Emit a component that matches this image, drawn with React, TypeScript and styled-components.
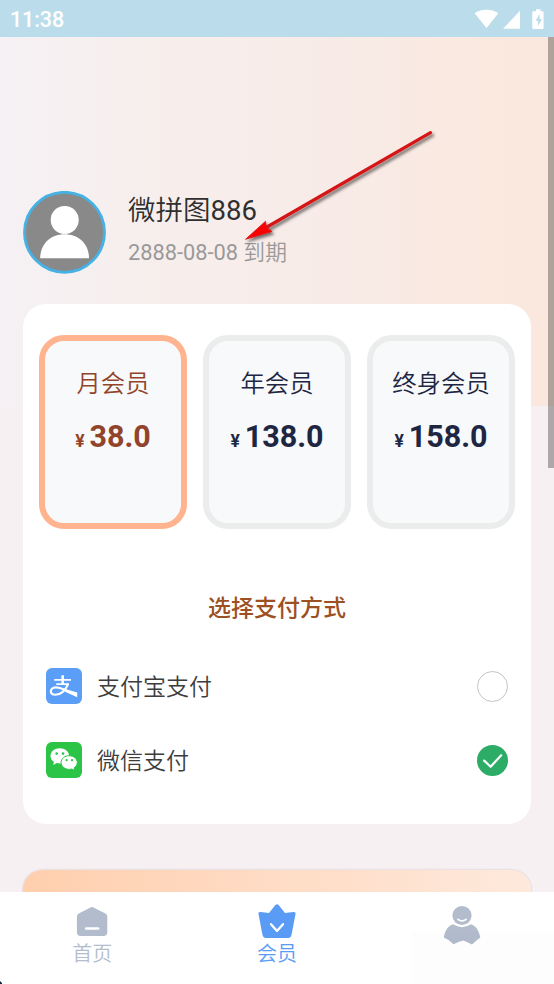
import React from "react";
import styled, { createGlobalStyle } from "styled-components";

const GlobalStyle = createGlobalStyle`
  *, *::before, *::after { box-sizing: border-box; }
  body {
    margin: 0;
    overflow: hidden;
    font-family: Roboto, "Noto Sans CJK SC", sans-serif;
  }
  svg { display: block; flex: none; }
`;

const Screen = styled.div`
  position: relative;
  display: flex;
  flex-direction: column;
  width: 554px;
  height: 984px;
  overflow: hidden;
  background: #f6f0f2;
`;

const StatusBar = styled.header`
  display: flex;
  align-items: center;
  justify-content: space-between;
  height: 37px;
  flex: none;
  padding: 0 9px 0 10px;
  background: #bbddeb;
  color: #fff;
`;

const Clock = styled.span`
  font-size: 21.5px;
  line-height: 37px;
  font-weight: 500;
  padding-top: 2px;
  letter-spacing: -0.1px;
`;

const Content = styled.main`
  position: relative;
  flex: 1;
  min-height: 0;
  overflow: hidden;
  padding: 154px 23px 0;
  background: linear-gradient(90deg, #f5f1f4 0%, #f7eeec 30%, #f8ebe7 60%, #fae8de 92%, #fae8df 100%)
    0 0 / 100% 369px no-repeat #f6f0f2;
`;

const Profile = styled.section`
  display: flex;
  height: 113px;
  gap: 22px;
`;

const ProfileText = styled.div`
  display: flex;
  flex-direction: column;
`;

const Digits = styled.span`
  font-weight: 400;
`;

const UserName = styled.h1`
  margin: 0;
  font-size: 27.500px;
  font-weight: 350;
  line-height: 40px;
  color: #2f2f2f;
`;

const Expiry = styled.p`
  margin: 5px 0 0;
  font-size: 21.800px;
  line-height: 34px;
  font-weight: 350;
  color: #999;
`;

const Card = styled.section`
  height: 520px;
  padding: 31px 16px 0;
  border-radius: 23px;
  background: #fff;
`;

const Plans = styled.div`
  display: grid;
  grid-template-columns: repeat(3, 1fr);
  gap: 16px;
`;

const Plan = styled.button<{ $active?: boolean }>`
  display: flex;
  flex-direction: column;
  align-items: center;
  height: 194px;
  padding: 23px 0 0;
  border: 6px solid ${(p) => (p.$active ? "#ffb48f" : "#ebeded")};
  border-radius: 25px;
  background: #f7f9fb;
  color: ${(p) => (p.$active ? "#92442b" : "#1e2642")};
  font-family: inherit;
`;

const PlanName = styled.span`
  font-size: 24.4px;
  line-height: 40px;
  font-weight: 350;
  white-space: nowrap;
`;

const Price = styled.span`
  display: flex;
  align-items: baseline;
  gap: 5px;
  margin-top: 13px;
  font-size: 30.500px;
  line-height: 40px;
  font-weight: 700;
`;

const Currency = styled.span`
  font-size: 17.500px;
`;

const SectionTitle = styled.h2`
  margin: 60px 0 0;
  font-size: 23px;
  line-height: 40px;
  font-weight: 500;
  text-align: center;
  color: #9d5021;
`;

const PayList = styled.div`
  display: flex;
  flex-direction: column;
  gap: 38px;
  padding: 39px 7px 0;
`;

const PayRow = styled.div`
  display: flex;
  align-items: center;
  height: 36px;
`;

const PayName = styled.span`
  flex: 1;
  padding: 3px 0 0 15px;
  font-size: 23px;
  line-height: 36px;
  font-weight: 350;
  color: #3d3d3d;
`;

const Radio = styled.span<{ $on?: boolean }>`
  display: grid;
  place-items: center;
  width: 31px;
  height: 31px;
  border-radius: 50%;
  border: ${(p) => (p.$on ? "0" : "1px solid #c4c4c4")};
  background: ${(p) => (p.$on ? "#2cac66" : "#fff")};
`;

const Banner = styled.section`
  height: 80px;
  margin: 46px 0 0;
  border-radius: 20px;
  background: linear-gradient(90deg, #ffcfae, #fee9dc);
  box-shadow: 0 0 2px rgba(90, 60, 60, 0.3);
`;

const ScrollThumb = styled.div`
  position: absolute;
  top: 0;
  right: 0;
  width: 6px;
  height: 431px;
  background: rgba(0, 0, 0, 0.3);
`;

const TabBar = styled.nav`
  display: grid;
  grid-template-columns: repeat(3, 1fr);
  height: 92px;
  flex: none;
  background: #fff;
`;

const Tab = styled.div<{ $active?: boolean }>`
  display: flex;
  flex-direction: column;
  align-items: center;
  padding-top: 10px;
  font-size: 20px;
  line-height: 30px;
  font-weight: 350;
  color: ${(p) => (p.$active ? "#5a9bf5" : "#b2bccd")};
`;

const TabLabel = styled.span`
  margin-top: 1px;
`;

const Arrow = styled.svg`
  position: absolute;
  left: 236px;
  top: 122px;
`;

const CornerMark = styled.svg`
  position: absolute;
  left: 0;
  bottom: 0;
`;

const CornerPatch = styled.div`
  position: absolute;
  left: 412px;
  right: 0;
  top: 931px;
  bottom: 0;
  background: rgba(0, 0, 0, 0.006);
`;

const StatusIcons = () => (
  <svg width="70" height="22" viewBox="475 7 70 22" fill="#fff">
    <path d="M474.700 12.300C481 7.700 492 7.700 498.300 12.300L486.500 27Z" />
    <path d="M503 27.800L520 9.800V27.800Z" />
    <path
      fillRule="evenodd"
      d="M536 8.300h4.500v2h1.900q1.200 0 1.200 1.200v15.200q0 1.200-1.200 1.200h-8.900q-1.200 0-1.200-1.200V11.500q0-1.200 1.200-1.200H536Z
       M539.600 12.800l-4 7h2.300v5.500l4-7.300h-2.300Z"
    />
  </svg>
);

const Avatar = () => (
  <svg width="83" height="83" viewBox="0 0 83 83">
    <circle cx="41.500" cy="41.300" r="40" fill="#898989" stroke="#45b1e5" strokeWidth="2.800" />
    <circle cx="41.700" cy="29" r="14" fill="#fff" />
    <path d="M17.200 67.300C17.200 52.500 28 43.200 41.600 43.200S66 52.500 66 67.300Z" fill="#fff" />
  </svg>
);

const AlipayIcon = () => (
  <svg width="36" height="36" viewBox="0 0 36 36">
    <rect width="36" height="36" rx="6" fill="#5a9ef7" />
    <g fill="none" stroke="#fff" strokeLinecap="butt">
      <path d="M8.200 11.800H25M10.300 16.200H23" strokeWidth="1.700" />
      <path d="M16.700 7.300V16" strokeWidth="2.600" />
      <path
        d="M22.200 16C19.500 21.800 15 26.800 9.400 26.800C5.800 26.800 4.500 24.700 4.900 22.600C5.400 20 8.700 18.600 12.800 19.800C18 21.200 24 24.500 31 27"
        strokeWidth="2.100"
      />
    </g>
    <path d="M17.500 20.600L31.200 24.600V29.200L17 22.800Z" fill="#fff" />
  </svg>
);

const WechatIcon = () => (
  <svg width="36" height="36" viewBox="0 0 36 36">
    <rect width="36" height="36" rx="6" fill="#2bc447" />
    <path
      d="M13.700 6.300C8.500 6.300 4.500 9.700 4.500 13.900c0 2.500 1.300 4.600 3.500 6L7.200 23l3.500-1.900c1 .3 2 .4 3 .4 5.300 0 9.400-3.200 9.400-7.600s-4.100-7.600-9.400-7.600Z"
      fill="#fff"
    />
    <path
      d="M23.200 13.700c-4.600 0-8.100 3-8.100 6.800s3.500 6.900 8.100 6.900c.9 0 1.800-.1 2.600-.4l3 1.600-.7-2.700c2-1.300 3.200-3.200 3.200-5.400 0-3.800-3.600-6.800-8.100-6.800Z"
      fill="#fff"
      stroke="#2bc447"
      strokeWidth="1"
    />
    <g fill="#2bc447">
      <circle cx="10.700" cy="11.600" r="1.300" />
      <circle cx="17" cy="11.600" r="1.300" />
      <circle cx="20.600" cy="18.200" r="1.100" />
      <circle cx="26" cy="18.200" r="1.100" />
    </g>
  </svg>
);

const HomeIcon = () => (
  <svg width="38" height="36" viewBox="0 0 38 36">
    <path
      d="M17.500 5.400Q19 4.600 20.500 5.400L32.400 11.500Q34.300 12.600 34.300 14.800V30.300Q34.300 34 30.600 34H7.600Q3.900 34 3.900 30.300V14.800Q3.900 12.600 5.800 11.500Z"
      fill="#b2bccd"
    />
    <path d="M13.200 26.400H25.200" stroke="#fff" strokeWidth="2.500" strokeLinecap="round" />
  </svg>
);

const CrownIcon = () => (
  <svg width="38" height="36" viewBox="0 0 38 36">
    <path
      d="M17.600 2.800Q19 1.500 20.400 2.800L27 11.100L35.500 9.900Q38 9.800 37.500 12L33.700 32Q33 35.900 30.200 35.900H7.800Q5 35.900 4.300 32L.5 12Q0 9.800 2.500 9.900L11 11.100Z"
      fill="#5a9bf5"
    />
    <path
      d="M13 22.200L19 29L25 22.200"
      fill="none"
      stroke="#fff"
      strokeWidth="2.300"
      strokeLinecap="round"
      strokeLinejoin="round"
    />
  </svg>
);

const MineIcon = () => (
  <svg width="38" height="44" viewBox="0 0 38 44" fill="#b2bccd">
    <circle cx="19" cy="13.500" r="9.600" />
    <path d="M14.900 17.300Q19 20.500 23.100 17.300" fill="none" stroke="#fff" strokeWidth="1.700" strokeLinecap="round" />
    <path d="M10 22.300Q19 28 28 22.300C33 23.500 36 29 37.300 35.500L33.500 38.500L29 42.500L24.500 40.300L20 38.600L15.500 40L10.500 42.200L5.500 38L.8 35.500C2 29 5 23.500 10 22.300Z" />
  </svg>
);

const Check = () => (
  <svg width="31" height="31" viewBox="0 0 31 31">
    <path d="M7.200 15.600L13.600 21.700L24.200 10.300" fill="none" stroke="#fff" strokeWidth="2.200" strokeLinecap="round" strokeLinejoin="round" />
  </svg>
);

const plans = [
  { name: "月会员", price: "38.0", active: true },
  { name: "年会员", price: "138.0", active: false },
  { name: "终身会员", price: "158.0", active: false },
];

export default function App() {
  return (
    <>
      <GlobalStyle />
      <Screen>
        <StatusBar>
          <Clock>11:38</Clock>
          <StatusIcons />
        </StatusBar>
        <Content>
          <Profile>
            <Avatar />
            <ProfileText>
              <UserName>
                微拼图<Digits>886</Digits>
              </UserName>
              <Expiry>
                <Digits>2888-08-08</Digits> 到期
              </Expiry>
            </ProfileText>
          </Profile>
          <Card>
            <Plans>
              {plans.map((plan) => (
                <Plan key={plan.name} $active={plan.active}>
                  <PlanName>{plan.name}</PlanName>
                  <Price>
                    <Currency>¥</Currency>
                    {plan.price}
                  </Price>
                </Plan>
              ))}
            </Plans>
            <SectionTitle>选择支付方式</SectionTitle>
            <PayList>
              <PayRow>
                <AlipayIcon />
                <PayName>支付宝支付</PayName>
                <Radio />
              </PayRow>
              <PayRow>
                <WechatIcon />
                <PayName>微信支付</PayName>
                <Radio $on>
                  <Check />
                </Radio>
              </PayRow>
            </PayList>
          </Card>
          <Banner />
          <ScrollThumb />
        </Content>
        <TabBar>
          <Tab>
            <HomeIcon />
            <TabLabel>首页</TabLabel>
          </Tab>
          <Tab $active>
            <CrownIcon />
            <TabLabel>会员</TabLabel>
          </Tab>
          <Tab>
            <MineIcon />
          </Tab>
        </TabBar>
        <Arrow width="210" height="130" viewBox="236 122 210 130">
          <defs>
            <filter id="arrow-shadow" x="-10%" y="-10%" width="125%" height="130%">
              <feDropShadow dx="2" dy="2.500" stdDeviation="1.800" floodColor="#000" floodOpacity="0.55" />
            </filter>
          </defs>
          <g filter="url(#arrow-shadow)">
            <path d="M430.500 132.700L267 227" stroke="#d51317" strokeWidth="3.200" strokeLinecap="round" />
            <path d="M245.500 239.300L265.500 221.300L266.500 227.500L272 231.500Z" fill="#fb0505" stroke="#d51317" strokeWidth="0.800" />
          </g>
        </Arrow>
        <CornerPatch />
        <CornerMark width="3" height="4" viewBox="0 0 3 4">
          <path d="M0 1L2 3V4H0Z" fill="#14283c" />
        </CornerMark>
      </Screen>
    </>
  );
}
